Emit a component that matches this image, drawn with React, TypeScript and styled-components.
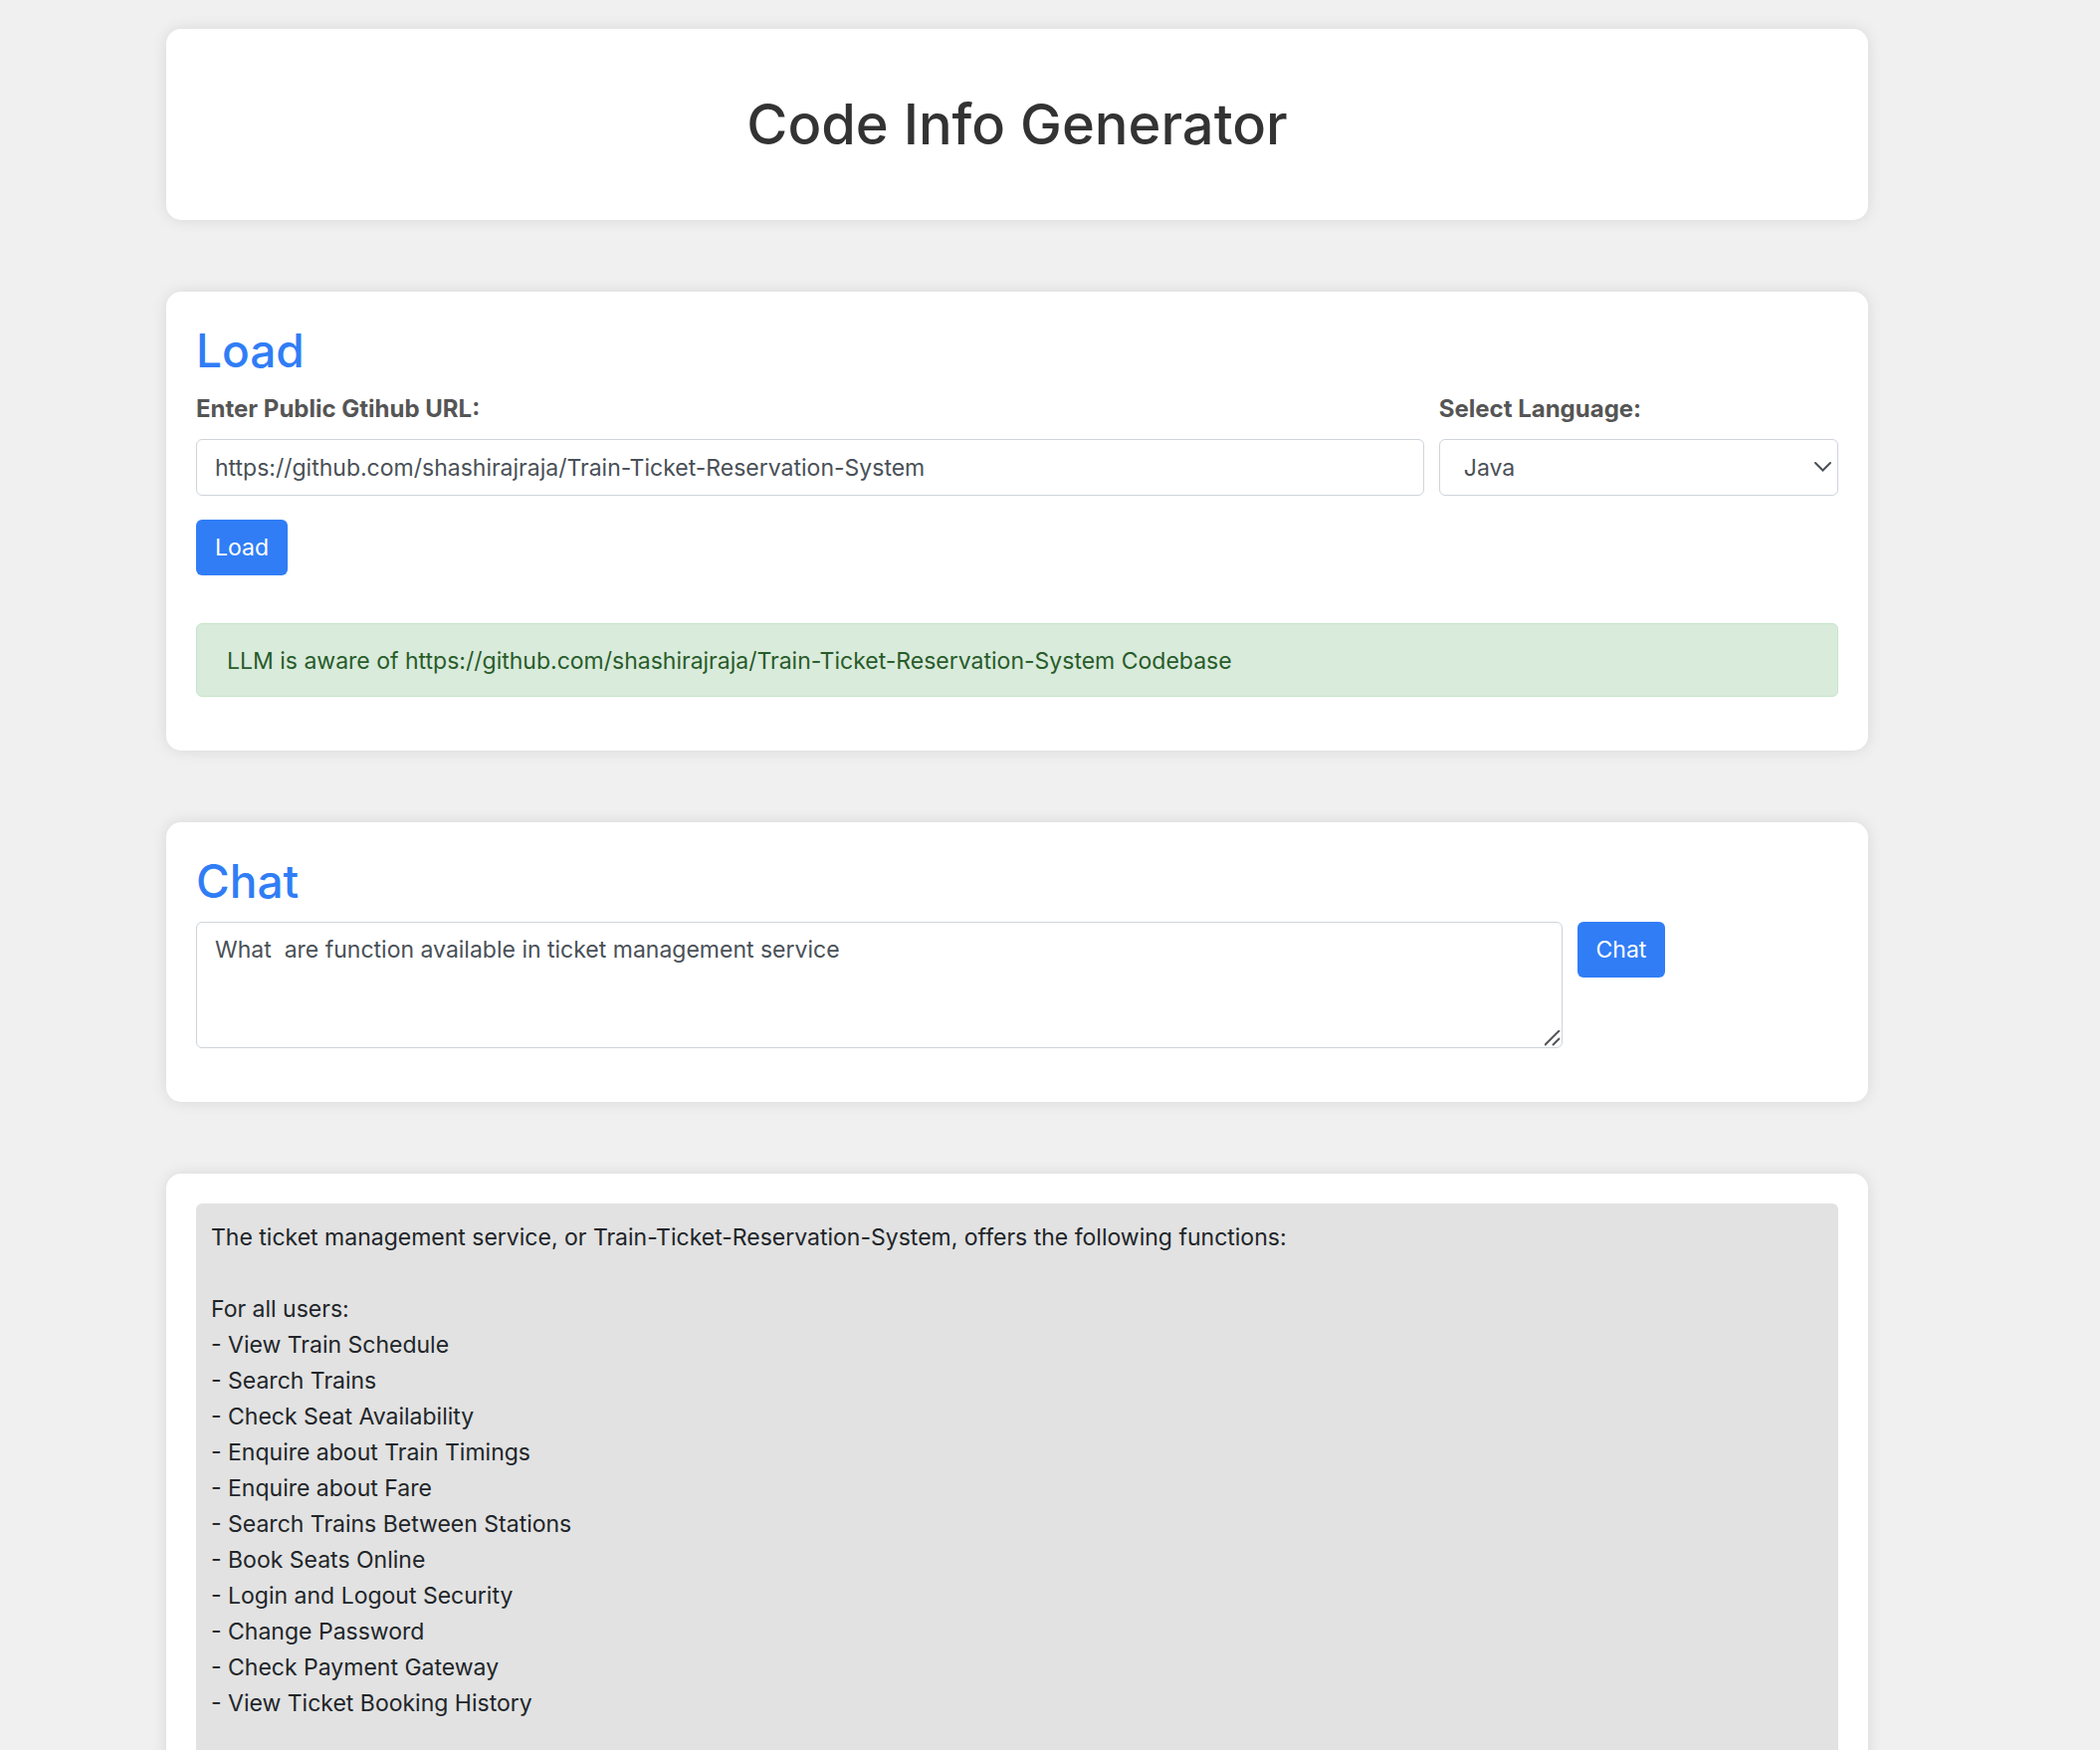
import { useId, useState } from 'react';
import styled, { createGlobalStyle } from 'styled-components';

const GlobalStyle = createGlobalStyle`
  *, *::before, *::after { box-sizing: border-box; }
  body {
    margin: 0;
    background: #f0f0f0;
    color: #212529;
    font-family: Inter, "Liberation Sans", sans-serif;
    font-size: 23px;
    line-height: 36px;
  }
`;

const Page = styled.main`
  display: flex;
  flex-direction: column;
  gap: 72px;
  max-width: 1776px;
  margin: 0 auto;
  padding: 29px 66px 72px 0;
  @media (max-width: 1800px) {
    padding: 29px 30px 72px;
  }
`;

const Card = styled.section<{ $roomy?: boolean }>`
  padding: ${p => (p.$roomy ? 60 : 30)}px 30px;
  border-radius: 15px;
  background: #fff;
  box-shadow: 0 0 15px rgba(0, 0, 0, 0.1);
`;

const PageTitle = styled.h1`
  margin: 0;
  color: #333;
  font-size: 56px;
  font-weight: 500;
  line-height: 72px;
  text-align: center;
`;

const CardTitle = styled.h2`
  margin: 0 0 12px;
  color: #307df6;
  font-size: 46px;
  font-weight: 500;
  line-height: 58px;
`;

const FieldRow = styled.div`
  display: grid;
  grid-template-columns: calc((100% + 15px) * 3 / 4 - 15px) 1fr;
  gap: 15px;
  margin-bottom: 24px;
`;

const Field = styled.div`
  display: flex;
  flex-direction: column;
  gap: 12px;
  min-width: 0;
`;

const Label = styled.label`
  color: #555;
  font-size: 24px;
  font-weight: 700;
`;

const controlStyle = `
  display: block;
  width: 100%;
  margin: 0;
  border: 1px solid #ced4da;
  border-radius: 6px;
  background: #fff;
  color: #495057;
  font: inherit;
  outline: none;
`;

const TextInput = styled.input`
  ${controlStyle}
  height: 57px;
  padding: 9px 18px;
`;

const SelectBox = styled.div`
  position: relative;
`;

const Select = styled.select`
  ${controlStyle}
  appearance: none;
  height: 57px;
  padding: 9px 24px;
`;

const Chevron = styled.svg`
  position: absolute;
  top: 22px;
  right: 6px;
  width: 19px;
  height: 12px;
  pointer-events: none;
`;

const Button = styled.button`
  height: 56px;
  padding: 0 19px;
  border: 0;
  border-radius: 6px;
  background: #307df6;
  color: #fff;
  font: inherit;
  cursor: pointer;
`;

const Alert = styled.div`
  margin: 48px 0 24px;
  padding: 19px 30px 17px;
  border: 1px solid #c6e4cb;
  border-radius: 6px;
  background: #d9ebdb;
  color: #285b2a;
  overflow-wrap: anywhere;
`;

const ChatRow = styled.div`
  display: grid;
  grid-template-columns: calc((100% + 15px) * 5 / 6 - 15px) auto;
  justify-content: start;
  align-items: start;
  gap: 15px;
  margin-bottom: 24px;
`;

const TextAreaBox = styled.div`
  position: relative;
`;

const TextArea = styled.textarea`
  ${controlStyle}
  height: 127px;
  padding: 9px 18px;
  resize: vertical;
  &::-webkit-resizer { display: none; }
`;

const Grip = styled.svg`
  position: absolute;
  right: 2px;
  bottom: 2px;
  width: 16px;
  height: 16px;
  pointer-events: none;
`;

const Answer = styled.pre`
  margin: 0;
  padding: 16px 15px;
  border-radius: 6px;
  background: #e2e2e2;
  font: inherit;
  white-space: pre-wrap;
`;

const REPO = 'https://github.com/shashirajraja/Train-Ticket-Reservation-System';

const ANSWER = `The ticket management service, or Train-Ticket-Reservation-System, offers the following functions:

For all users:
- View Train Schedule
- Search Trains
- Check Seat Availability
- Enquire about Train Timings
- Enquire about Fare
- Search Trains Between Stations
- Book Seats Online
- Login and Logout Security
- Change Password
- Check Payment Gateway
- View Ticket Booking History

`;

export default function App() {
  const urlId = useId();
  const languageId = useId();
  const [url, setUrl] = useState(REPO);
  const [language, setLanguage] = useState('Java');
  const [question, setQuestion] = useState('What  are function available in ticket management service');

  return (
    <>
      <GlobalStyle />
      <Page>
        <Card as="header" $roomy>
          <PageTitle>Code Info Generator</PageTitle>
        </Card>

        <Card>
          <CardTitle>Load</CardTitle>
          <FieldRow>
            <Field>
              <Label htmlFor={urlId}>Enter Public Gtihub URL:</Label>
              <TextInput id={urlId} type="text" value={url} onChange={e => setUrl(e.target.value)} />
            </Field>
            <Field>
              <Label htmlFor={languageId}>Select Language:</Label>
              <SelectBox>
                <Select id={languageId} value={language} onChange={e => setLanguage(e.target.value)}>
                  <option>Java</option>
                </Select>
                <Chevron viewBox="0 0 19 12" fill="none" stroke="#495057" strokeWidth="2" strokeLinecap="round" aria-hidden="true">
                  <path d="M2 2l7.5 7.5L17 2" />
                </Chevron>
              </SelectBox>
            </Field>
          </FieldRow>
          <Button type="button">Load</Button>
          <Alert role="status">LLM is aware of {REPO} Codebase</Alert>
        </Card>

        <Card>
          <CardTitle>Chat</CardTitle>
          <ChatRow>
            <TextAreaBox>
              <TextArea aria-label="Chat" value={question} onChange={e => setQuestion(e.target.value)} />
              <Grip viewBox="0 0 16 16" fill="none" stroke="#555" strokeWidth="2" aria-hidden="true">
                <path d="M0 15L15 0M8 15L15 8" />
              </Grip>
            </TextAreaBox>
            <Button type="button">Chat</Button>
          </ChatRow>
        </Card>

        <Card>
          <Answer>{ANSWER}</Answer>
        </Card>
      </Page>
    </>
  );
}
